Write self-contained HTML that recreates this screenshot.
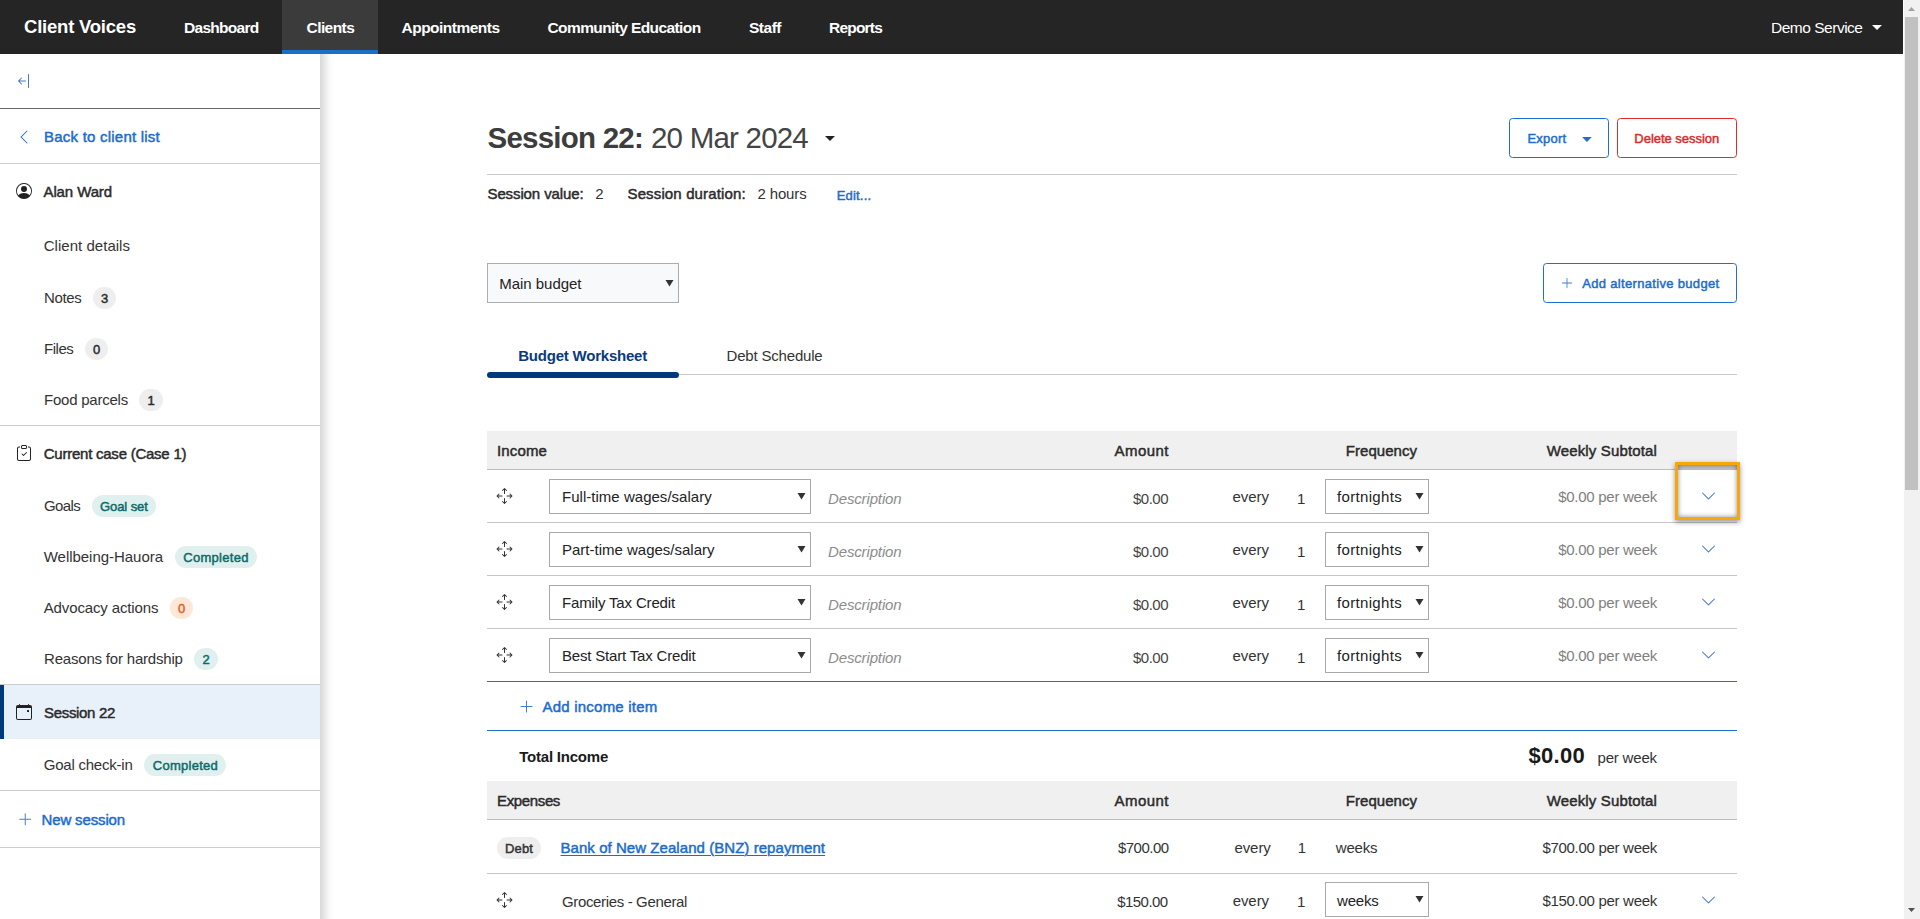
<!DOCTYPE html>
<html lang="en">
<head>
<meta charset="utf-8">
<title>Client Voices - Session 22</title>
<style>
*{box-sizing:border-box;margin:0;padding:0}
html,body{width:1920px;height:919px;overflow:hidden;background:#fff}
body{position:relative;font-family:"Liberation Sans",sans-serif;font-size:15px;color:#333}
.a{position:absolute}
.t{position:absolute;white-space:nowrap}
svg{overflow:visible}
</style>
</head>
<body>

<!-- sidebar -->
<aside>
<div class="a" style="left:0px;top:30px;width:320px;height:920px;background:#fff;box-shadow:4px 0 10px rgba(0,0,0,.2)"></div>
<svg class="a" style="left:16px;top:73px" width="16" height="16" viewBox="0 0 16 16"><path fill="#4b76cc" fill-rule="evenodd" d="M12.500 15a.5.5 0 0 1-.5-.5v-13a.5.5 0 0 1 1 0v13a.5.5 0 0 1-.5.5zM10 8a.5.5 0 0 1-.5.5H3.707l2.147 2.146a.5.5 0 0 1-.708.708l-3-3a.5.5 0 0 1 0-.708l3-3a.5.5 0 1 1 .708.708L3.707 7.500H9.500a.5.5 0 0 1 .5.5z"/></svg>
<div class="a" style="left:0px;top:108px;width:320px;height:1px;background:#6a6a6a"></div>
<svg class="a" style="left:16px;top:129px" width="16" height="16" viewBox="0 0 16 16"><path fill="#1c6ccb" fill-rule="evenodd" d="M11.354 1.646a.5.5 0 0 1 0 .708L5.707 8l5.647 5.646a.5.5 0 0 1-.708.708l-6-6a.5.5 0 0 1 0-.708l6-6a.5.5 0 0 1 .708 0z"/></svg>
<span class="t" style="letter-spacing:0.225px;left:44.00px;top:127.00px;font-size:15px;line-height:20px;color:#1c6ccb;-webkit-text-stroke:0.47px #1c6ccb">Back to client list</span>
<div class="a" style="left:0px;top:163px;width:320px;height:1px;background:#cdcdcd"></div>
<svg class="a" style="left:16px;top:183px" width="16" height="16" viewBox="0 0 16 16"><path fill="#222" fill-rule="evenodd" d="M11 6a3 3 0 1 1-6 0 3 3 0 0 1 6 0zM0 8a8 8 0 1 1 16 0A8 8 0 0 1 0 8zm8-7a7 7 0 0 0-5.468 11.370C3.242 11.226 4.805 10 8 10s4.757 1.225 5.468 2.370A7 7 0 0 0 8 1z"/></svg>
<span class="t" style="letter-spacing:-0.109px;left:43.50px;top:182.00px;font-size:15px;line-height:20px;color:#2b2b2b;-webkit-text-stroke:0.47px #2b2b2b">Alan Ward</span>
<span class="t" style="letter-spacing:0.026px;left:43.75px;top:236.00px;font-size:15px;line-height:20px">Client details</span>
<span class="t" style="letter-spacing:-0.388px;left:44.00px;top:288.00px;font-size:15px;line-height:20px">Notes</span>
<div class="a" style="left:93px;top:287px;width:23px;height:22px;background:#eeeeee;border-radius:11.0px"></div>
<span class="t" style="left:101.00px;top:289.00px;font-size:13px;line-height:20px;color:#2b2b2b;-webkit-text-stroke:0.47px #2b2b2b">3</span>
<span class="t" style="letter-spacing:-0.484px;left:44.00px;top:339.00px;font-size:15px;line-height:20px">Files</span>
<div class="a" style="left:85px;top:338px;width:23px;height:22px;background:#eeeeee;border-radius:11.0px"></div>
<span class="t" style="left:93.00px;top:340.00px;font-size:13px;line-height:20px;color:#2b2b2b;-webkit-text-stroke:0.47px #2b2b2b">0</span>
<span class="t" style="letter-spacing:-0.227px;left:44.00px;top:390.00px;font-size:15px;line-height:20px">Food parcels</span>
<div class="a" style="left:139px;top:389px;width:24px;height:22px;background:#eeeeee;border-radius:11.0px"></div>
<span class="t" style="left:147.50px;top:391.00px;font-size:13px;line-height:20px;color:#2b2b2b;-webkit-text-stroke:0.47px #2b2b2b">1</span>
<div class="a" style="left:0px;top:425px;width:320px;height:1px;background:#cdcdcd"></div>
<svg class="a" style="left:16px;top:445px" width="16" height="16" viewBox="0 0 16 16"><path fill="#222" fill-rule="evenodd" d="M10.854 7.146a.5.5 0 0 1 0 .708l-3 3a.5.5 0 0 1-.708 0l-1.500-1.500a.5.5 0 1 1 .708-.708L7.500 9.793l2.646-2.647a.5.5 0 0 1 .708 0zM4 1.500H3a2 2 0 0 0-2 2V14a2 2 0 0 0 2 2h10a2 2 0 0 0 2-2V3.500a2 2 0 0 0-2-2h-1v1h1a1 1 0 0 1 1 1V14a1 1 0 0 1-1 1H3a1 1 0 0 1-1-1V3.500a1 1 0 0 1 1-1h1v-1zM9.500 1a.5.5 0 0 1 .5.5v1a.5.5 0 0 1-.5.5h-3a.5.5 0 0 1-.5-.5v-1a.5.5 0 0 1 .5-.5h3zm-3-1A1.500 1.500 0 0 0 5 1.500v1A1.500 1.500 0 0 0 6.500 4h3A1.500 1.500 0 0 0 11 2.500v-1A1.500 1.500 0 0 0 9.500 0h-3z"/></svg>
<span class="t" style="letter-spacing:-0.241px;left:43.75px;top:444.00px;font-size:15px;line-height:20px;color:#2b2b2b;-webkit-text-stroke:0.47px #2b2b2b">Current case (Case 1)</span>
<span class="t" style="letter-spacing:-0.588px;left:44.00px;top:496.00px;font-size:15px;line-height:20px">Goals</span>
<div class="a" style="left:92px;top:495px;width:64px;height:22px;background:#dff0ee;border-radius:11.0px"></div>
<span class="t" style="letter-spacing:-0.084px;left:100.00px;top:497.00px;font-size:13px;line-height:20px;color:#0b6b68;-webkit-text-stroke:0.47px #0b6b68">Goal set</span>
<span class="t" style="letter-spacing:-0.034px;left:43.75px;top:547.00px;font-size:15px;line-height:20px">Wellbeing-Hauora</span>
<div class="a" style="left:175px;top:546px;width:82px;height:22px;background:#dff0ee;border-radius:11.0px"></div>
<span class="t" style="letter-spacing:0.292px;left:183.25px;top:548.00px;font-size:13px;line-height:20px;color:#0b6b68;-webkit-text-stroke:0.47px #0b6b68">Completed</span>
<span class="t" style="letter-spacing:-0.140px;left:43.75px;top:598.00px;font-size:15px;line-height:20px">Advocacy actions</span>
<div class="a" style="left:170px;top:597px;width:23px;height:22px;background:#fde8d8;border-radius:11.0px"></div>
<span class="t" style="left:178.00px;top:599.00px;font-size:13px;line-height:20px;color:#e5601a;-webkit-text-stroke:0.47px #e5601a">0</span>
<span class="t" style="letter-spacing:-0.192px;left:44.00px;top:649.00px;font-size:15px;line-height:20px">Reasons for hardship</span>
<div class="a" style="left:194px;top:648px;width:24px;height:22px;background:#dff0ee;border-radius:11.0px"></div>
<span class="t" style="left:202.50px;top:650.00px;font-size:13px;line-height:20px;color:#0b6b68;-webkit-text-stroke:0.47px #0b6b68">2</span>
<div class="a" style="left:0px;top:684px;width:320px;height:1px;background:#cdcdcd"></div>
<div class="a" style="left:0px;top:685px;width:320px;height:54px;background:#e8f0fa;border-left:4px solid #003a7d"></div>
<svg class="a" style="left:16px;top:704px" width="16" height="16" viewBox="0 0 16 16"><path fill="#222" fill-rule="evenodd" d="M11 6.500a.5.5 0 0 1 .5-.5h1a.5.5 0 0 1 .5.5v1a.5.5 0 0 1-.5.5h-1a.5.5 0 0 1-.5-.5v-1zM3.500 0a.5.5 0 0 1 .5.5V1h8V.5a.5.5 0 0 1 1 0V1h1a2 2 0 0 1 2 2v11a2 2 0 0 1-2 2H2a2 2 0 0 1-2-2V3a2 2 0 0 1 2-2h1V.5a.5.5 0 0 1 .5-.5zM1 4v10a1 1 0 0 0 1 1h12a1 1 0 0 0 1-1V4H1z"/></svg>
<span class="t" style="letter-spacing:-0.322px;left:44.00px;top:703.00px;font-size:15px;line-height:20px;color:#2b2b2b;-webkit-text-stroke:0.47px #2b2b2b">Session 22</span>
<span class="t" style="letter-spacing:-0.228px;left:43.75px;top:755.00px;font-size:15px;line-height:20px">Goal check-in</span>
<div class="a" style="left:144px;top:754px;width:82px;height:22px;background:#dff0ee;border-radius:11.0px"></div>
<span class="t" style="letter-spacing:0.264px;left:152.75px;top:756.00px;font-size:13px;line-height:20px;color:#0b6b68;-webkit-text-stroke:0.47px #0b6b68">Completed</span>
<div class="a" style="left:0px;top:790px;width:320px;height:1px;background:#cdcdcd"></div>
<svg class="a" style="left:17px;top:811px" width="17" height="17" viewBox="-0.25 -0.25 17 17"><path fill="#3f7fd6" fill-rule="evenodd" d="M8 2a.5.5 0 0 1 .5.5v5h5a.5.5 0 0 1 0 1h-5v5a.5.5 0 0 1-1 0v-5h-5a.5.5 0 0 1 0-1h5v-5A.5.5 0 0 1 8 2z"/></svg>
<span class="t" style="letter-spacing:-0.141px;left:41.50px;top:810.00px;font-size:15px;line-height:20px;color:#1c6ccb;-webkit-text-stroke:0.47px #1c6ccb">New session</span>
<div class="a" style="left:0px;top:847px;width:320px;height:1px;background:#cdcdcd"></div>
</aside>
<!-- navbar -->
<nav>
<div class="a" style="left:0px;top:0px;width:1903px;height:54px;background:#252525"></div>
<div class="a" style="left:282px;top:0px;width:96px;height:54px;background:#3b3b3b;border-bottom:4px solid #1a6fc7"></div>
<span class="t" style="letter-spacing:-0.216px;left:24.00px;top:15.01px;font-size:18.5px;line-height:24px;color:#fff;font-weight:700">Client Voices</span>
<span class="t" style="letter-spacing:-0.719px;left:184.00px;top:18.00px;font-size:15.5px;line-height:20px;color:#fff;font-weight:700">Dashboard</span>
<span class="t" style="letter-spacing:-0.562px;left:306.50px;top:18.00px;font-size:15.5px;line-height:20px;color:#fff;font-weight:700">Clients</span>
<span class="t" style="letter-spacing:-0.516px;left:401.50px;top:18.00px;font-size:15.5px;line-height:20px;color:#fff;font-weight:700">Appointments</span>
<span class="t" style="letter-spacing:-0.604px;left:547.50px;top:18.00px;font-size:15.5px;line-height:20px;color:#fff;font-weight:700">Community Education</span>
<span class="t" style="letter-spacing:-0.491px;left:749.00px;top:18.00px;font-size:15.5px;line-height:20px;color:#fff;font-weight:700">Staff</span>
<span class="t" style="letter-spacing:-0.797px;left:829.00px;top:18.00px;font-size:15.5px;line-height:20px;color:#fff;font-weight:700">Reports</span>
<span class="t" style="letter-spacing:-0.487px;left:1771.00px;top:18.00px;font-size:15.5px;line-height:20px;color:#fff">Demo Service</span>
<svg class="a" style="left:1872px;top:25px" width="10" height="5" viewBox="0 0 10 5"><polygon fill="#fff" points="0,0 10,0 5,5"/></svg>
</nav>
<!-- scrollbar -->
<div>
<div class="a" style="left:1903px;top:0px;width:17px;height:919px;background:#f1f1f1;border-left:1px solid #fdfdfd"></div>
<div class="a" style="left:1905px;top:17px;width:13px;height:473px;background:#c1c1c1"></div>
<svg class="a" style="left:1908px;top:7px" width="7" height="4" viewBox="0 0 7 4"><polygon fill="#a3a3a3" points="0,4 7,4 3.5,0"/></svg>
<svg class="a" style="left:1908px;top:908px" width="7" height="4" viewBox="0 0 7 4"><polygon fill="#505050" points="0,0 7,0 3.5,4"/></svg>
</div>
<!-- main -->
<main>
<span class="t" style="letter-spacing:-0.770px;left:487.50px;top:119.01px;font-size:29.5px;line-height:38px;color:#3d3d3d;font-weight:700">Session 22:</span>
<span class="t" style="letter-spacing:-0.786px;left:651.00px;top:119.01px;font-size:29.5px;line-height:38px;color:#444">20 Mar 2024</span>
<svg class="a" style="left:825px;top:136px" width="10" height="5" viewBox="0 0 10 5"><polygon fill="#222" points="0,0 10,0 5,5"/></svg>
<div class="a" style="left:1509px;top:118px;width:100px;height:40px;border:1px solid #1f70cd;border-radius:3.5px;background:#fff"></div>
<span class="t" style="letter-spacing:0.195px;left:1527.50px;top:129.00px;font-size:13px;line-height:20px;color:#1c6ccb;-webkit-text-stroke:0.47px #1c6ccb">Export</span>
<svg class="a" style="left:1582px;top:137px" width="10" height="5" viewBox="0 0 10 5"><polygon fill="#1f70cd" points="0.1,0.1 9.8,0.1 4.95,4.9"/></svg>
<div class="a" style="left:1617px;top:118px;width:120px;height:40px;border:1px solid #e02b2b;border-radius:3.5px;background:#fff"></div>
<span class="t" style="letter-spacing:-0.020px;left:1634.30px;top:129.00px;font-size:13px;line-height:20px;color:#d92b2b;-webkit-text-stroke:0.47px #d92b2b">Delete session</span>
<div class="a" style="left:487px;top:174px;width:1250px;height:1px;background:#c8c8c8"></div>
<span class="t" style="letter-spacing:-0.112px;left:487.50px;top:184.00px;font-size:15px;line-height:20px;color:#2b2b2b;-webkit-text-stroke:0.47px #2b2b2b">Session value:</span>
<span class="t" style="left:595.25px;top:184.00px;font-size:15px;line-height:20px">2</span>
<span class="t" style="letter-spacing:0.138px;left:627.50px;top:184.00px;font-size:15px;line-height:20px;color:#2b2b2b;-webkit-text-stroke:0.47px #2b2b2b">Session duration:</span>
<span class="t" style="letter-spacing:-0.150px;left:757.50px;top:184.00px;font-size:15px;line-height:20px">2 hours</span>
<span class="t" style="letter-spacing:0.179px;left:836.75px;top:186.00px;font-size:13px;line-height:20px;color:#1c6ccb;-webkit-text-stroke:0.47px #1c6ccb">Edit...</span>
<div class="a" style="left:487px;top:263px;width:192px;height:40px;border:1px solid #adadad;background:#f8f9fa"></div>
<span class="t" style="letter-spacing:-0.028px;left:499.25px;top:274.00px;font-size:15px;line-height:20px;color:#222">Main budget</span>
<svg class="a" style="left:665px;top:280px" width="9" height="7" viewBox="0 0 9 7"><polygon fill="#333" points="0.5,0 8.5,0 4.5,6.5"/></svg>
<div class="a" style="left:1543px;top:263px;width:194px;height:40px;border:1px solid #1f70cd;border-radius:3.5px;background:#fff"></div>
<svg class="a" style="left:1560px;top:276px" width="14" height="14" viewBox="0 0 16 16"><path fill="#3f7fd6" fill-rule="evenodd" d="M8 2a.5.5 0 0 1 .5.5v5h5a.5.5 0 0 1 0 1h-5v5a.5.5 0 0 1-1 0v-5h-5a.5.5 0 0 1 0-1h5v-5A.5.5 0 0 1 8 2z"/></svg>
<span class="t" style="letter-spacing:0.322px;left:1582.25px;top:274.00px;font-size:13px;line-height:20px;color:#1c6ccb;-webkit-text-stroke:0.47px #1c6ccb">Add alternative budget</span>
<span class="t" style="letter-spacing:-0.219px;left:518.25px;top:346.00px;font-size:15px;line-height:20px;color:#0a3a7d;font-weight:700">Budget Worksheet</span>
<span class="t" style="letter-spacing:-0.185px;left:726.50px;top:346.00px;font-size:15px;line-height:20px;color:#333">Debt Schedule</span>
<div class="a" style="left:487px;top:374px;width:1250px;height:1px;background:#c8c8c8"></div>
<div class="a" style="left:487px;top:372px;width:192px;height:6px;background:#003a7d;border-radius:3px"></div>
<div class="a" style="left:487px;top:431px;width:1250px;height:38px;background:#f0f0f0"></div>
<div class="a" style="left:487px;top:469px;width:1250px;height:1px;background:#bdbdbd"></div>
<span class="t" style="letter-spacing:0.133px;left:497.00px;top:441.00px;font-size:15px;line-height:20px;color:#2b2b2b;-webkit-text-stroke:0.47px #2b2b2b">Income</span>
<span class="t" style="letter-spacing:0.466px;left:1114.50px;top:441.00px;font-size:15px;line-height:20px;color:#2b2b2b;-webkit-text-stroke:0.47px #2b2b2b">Amount</span>
<span class="t" style="letter-spacing:0.042px;left:1345.75px;top:441.00px;font-size:15px;line-height:20px;color:#2b2b2b;-webkit-text-stroke:0.47px #2b2b2b">Frequency</span>
<span class="t" style="letter-spacing:0.145px;left:1546.70px;top:441.00px;font-size:15px;line-height:20px;color:#2b2b2b;-webkit-text-stroke:0.47px #2b2b2b">Weekly Subtotal</span>
<svg class="a" style="left:496px;top:488px" width="17" height="16" viewBox="-0.5 0 17 16"><path fill="#333" fill-rule="evenodd" d="M7.646.146a.5.5 0 0 1 .708 0l2 2a.5.5 0 0 1-.708.708L8.500 1.707V5.500a.5.5 0 0 1-1 0V1.707L6.354 2.854a.5.5 0 1 1-.708-.708l2-2zM8 10a.5.5 0 0 1 .5.5v3.793l1.146-1.147a.5.5 0 0 1 .708.708l-2 2a.5.5 0 0 1-.708 0l-2-2a.5.5 0 0 1 .708-.708L7.500 14.293V10.500A.5.5 0 0 1 8 10zM.146 8.354a.5.5 0 0 1 0-.708l2-2a.5.5 0 1 1 .708.708L1.707 7.500H5.500a.5.5 0 0 1 0 1H1.707l1.147 1.146a.5.5 0 0 1-.708.708l-2-2zM10 8a.5.5 0 0 1 .5-.5h3.793l-1.147-1.146a.5.5 0 0 1 .708-.708l2 2a.5.5 0 0 1 0 .708l-2 2a.5.5 0 0 1-.708-.708L14.293 8.500H10.500A.5.5 0 0 1 10 8z"/></svg>
<div class="a" style="left:549px;top:479px;width:262px;height:35px;border:1px solid #a9a9a9;background:#fff"></div>
<span class="t" style="letter-spacing:0.024px;left:562.00px;top:487.00px;font-size:15px;line-height:20px;color:#222">Full-time wages/salary</span>
<svg class="a" style="left:797px;top:493px" width="9" height="7" viewBox="0 0 9 7"><polygon fill="#333" points="0.5,0 8.5,0 4.5,6.5"/></svg>
<span class="t" style="letter-spacing:-0.139px;left:828.00px;top:489.00px;font-size:15px;line-height:20px;color:#8c8c8c;font-style:italic">Description</span>
<span class="t" style="letter-spacing:-0.509px;left:1133.00px;top:489.00px;font-size:15px;line-height:20px;color:#444">$0.00</span>
<span class="t" style="letter-spacing:-0.037px;left:1232.50px;top:487.00px;font-size:15px;line-height:20px;color:#333">every</span>
<span class="t" style="left:1297.00px;top:489.00px;font-size:15px;line-height:20px;color:#333">1</span>
<div class="a" style="left:1325px;top:479px;width:104px;height:35px;border:1px solid #a9a9a9;background:#fff"></div>
<span class="t" style="letter-spacing:0.330px;left:1337.00px;top:487.00px;font-size:15px;line-height:20px;color:#222">fortnights</span>
<svg class="a" style="left:1415px;top:493px" width="9" height="7" viewBox="0 0 9 7"><polygon fill="#333" points="0.5,0 8.5,0 4.5,6.5"/></svg>
<span class="t" style="letter-spacing:-0.270px;left:1558.20px;top:487.00px;font-size:15px;line-height:20px;color:#808080">$0.00 per week</span>
<svg class="a" style="left:1700px;top:488px" width="17" height="16" viewBox="-0.5 0 17 16"><path fill="#3f72cf" fill-rule="evenodd" d="M1.646 4.646a.5.5 0 0 1 .708 0L8 10.293l5.646-5.647a.5.5 0 0 1 .708.708l-6 6a.5.5 0 0 1-.708 0l-6-6a.5.5 0 0 1 0-.708z"/></svg>
<div class="a" style="left:487px;top:522px;width:1250px;height:1px;background:#c6c6c6"></div>
<svg class="a" style="left:496px;top:541px" width="17" height="16" viewBox="-0.5 0 17 16"><path fill="#333" fill-rule="evenodd" d="M7.646.146a.5.5 0 0 1 .708 0l2 2a.5.5 0 0 1-.708.708L8.500 1.707V5.500a.5.5 0 0 1-1 0V1.707L6.354 2.854a.5.5 0 1 1-.708-.708l2-2zM8 10a.5.5 0 0 1 .5.5v3.793l1.146-1.147a.5.5 0 0 1 .708.708l-2 2a.5.5 0 0 1-.708 0l-2-2a.5.5 0 0 1 .708-.708L7.500 14.293V10.500A.5.5 0 0 1 8 10zM.146 8.354a.5.5 0 0 1 0-.708l2-2a.5.5 0 1 1 .708.708L1.707 7.500H5.500a.5.5 0 0 1 0 1H1.707l1.147 1.146a.5.5 0 0 1-.708.708l-2-2zM10 8a.5.5 0 0 1 .5-.5h3.793l-1.147-1.146a.5.5 0 0 1 .708-.708l2 2a.5.5 0 0 1 0 .708l-2 2a.5.5 0 0 1-.708-.708L14.293 8.500H10.500A.5.5 0 0 1 10 8z"/></svg>
<div class="a" style="left:549px;top:532px;width:262px;height:35px;border:1px solid #a9a9a9;background:#fff"></div>
<span class="t" style="letter-spacing:-0.003px;left:562.00px;top:540.00px;font-size:15px;line-height:20px;color:#222">Part-time wages/salary</span>
<svg class="a" style="left:797px;top:546px" width="9" height="7" viewBox="0 0 9 7"><polygon fill="#333" points="0.5,0 8.5,0 4.5,6.5"/></svg>
<span class="t" style="letter-spacing:-0.139px;left:828.00px;top:542.00px;font-size:15px;line-height:20px;color:#8c8c8c;font-style:italic">Description</span>
<span class="t" style="letter-spacing:-0.509px;left:1133.00px;top:542.00px;font-size:15px;line-height:20px;color:#444">$0.00</span>
<span class="t" style="letter-spacing:-0.037px;left:1232.50px;top:540.00px;font-size:15px;line-height:20px;color:#333">every</span>
<span class="t" style="left:1297.00px;top:542.00px;font-size:15px;line-height:20px;color:#333">1</span>
<div class="a" style="left:1325px;top:532px;width:104px;height:35px;border:1px solid #a9a9a9;background:#fff"></div>
<span class="t" style="letter-spacing:0.330px;left:1337.00px;top:540.00px;font-size:15px;line-height:20px;color:#222">fortnights</span>
<svg class="a" style="left:1415px;top:546px" width="9" height="7" viewBox="0 0 9 7"><polygon fill="#333" points="0.5,0 8.5,0 4.5,6.5"/></svg>
<span class="t" style="letter-spacing:-0.270px;left:1558.20px;top:540.00px;font-size:15px;line-height:20px;color:#808080">$0.00 per week</span>
<svg class="a" style="left:1700px;top:541px" width="17" height="16" viewBox="-0.5 0 17 16"><path fill="#3f72cf" fill-rule="evenodd" d="M1.646 4.646a.5.5 0 0 1 .708 0L8 10.293l5.646-5.647a.5.5 0 0 1 .708.708l-6 6a.5.5 0 0 1-.708 0l-6-6a.5.5 0 0 1 0-.708z"/></svg>
<div class="a" style="left:487px;top:575px;width:1250px;height:1px;background:#c6c6c6"></div>
<svg class="a" style="left:496px;top:594px" width="17" height="16" viewBox="-0.5 0 17 16"><path fill="#333" fill-rule="evenodd" d="M7.646.146a.5.5 0 0 1 .708 0l2 2a.5.5 0 0 1-.708.708L8.500 1.707V5.500a.5.5 0 0 1-1 0V1.707L6.354 2.854a.5.5 0 1 1-.708-.708l2-2zM8 10a.5.5 0 0 1 .5.5v3.793l1.146-1.147a.5.5 0 0 1 .708.708l-2 2a.5.5 0 0 1-.708 0l-2-2a.5.5 0 0 1 .708-.708L7.500 14.293V10.500A.5.5 0 0 1 8 10zM.146 8.354a.5.5 0 0 1 0-.708l2-2a.5.5 0 1 1 .708.708L1.707 7.500H5.500a.5.5 0 0 1 0 1H1.707l1.147 1.146a.5.5 0 0 1-.708.708l-2-2zM10 8a.5.5 0 0 1 .5-.5h3.793l-1.147-1.146a.5.5 0 0 1 .708-.708l2 2a.5.5 0 0 1 0 .708l-2 2a.5.5 0 0 1-.708-.708L14.293 8.500H10.500A.5.5 0 0 1 10 8z"/></svg>
<div class="a" style="left:549px;top:585px;width:262px;height:35px;border:1px solid #a9a9a9;background:#fff"></div>
<span class="t" style="letter-spacing:-0.153px;left:562.00px;top:593.00px;font-size:15px;line-height:20px;color:#222">Family Tax Credit</span>
<svg class="a" style="left:797px;top:599px" width="9" height="7" viewBox="0 0 9 7"><polygon fill="#333" points="0.5,0 8.5,0 4.5,6.5"/></svg>
<span class="t" style="letter-spacing:-0.139px;left:828.00px;top:595.00px;font-size:15px;line-height:20px;color:#8c8c8c;font-style:italic">Description</span>
<span class="t" style="letter-spacing:-0.509px;left:1133.00px;top:595.00px;font-size:15px;line-height:20px;color:#444">$0.00</span>
<span class="t" style="letter-spacing:-0.037px;left:1232.50px;top:593.00px;font-size:15px;line-height:20px;color:#333">every</span>
<span class="t" style="left:1297.00px;top:595.00px;font-size:15px;line-height:20px;color:#333">1</span>
<div class="a" style="left:1325px;top:585px;width:104px;height:35px;border:1px solid #a9a9a9;background:#fff"></div>
<span class="t" style="letter-spacing:0.330px;left:1337.00px;top:593.00px;font-size:15px;line-height:20px;color:#222">fortnights</span>
<svg class="a" style="left:1415px;top:599px" width="9" height="7" viewBox="0 0 9 7"><polygon fill="#333" points="0.5,0 8.5,0 4.5,6.5"/></svg>
<span class="t" style="letter-spacing:-0.270px;left:1558.20px;top:593.00px;font-size:15px;line-height:20px;color:#808080">$0.00 per week</span>
<svg class="a" style="left:1700px;top:594px" width="17" height="16" viewBox="-0.5 0 17 16"><path fill="#3f72cf" fill-rule="evenodd" d="M1.646 4.646a.5.5 0 0 1 .708 0L8 10.293l5.646-5.647a.5.5 0 0 1 .708.708l-6 6a.5.5 0 0 1-.708 0l-6-6a.5.5 0 0 1 0-.708z"/></svg>
<div class="a" style="left:487px;top:628px;width:1250px;height:1px;background:#c6c6c6"></div>
<svg class="a" style="left:496px;top:647px" width="17" height="16" viewBox="-0.5 0 17 16"><path fill="#333" fill-rule="evenodd" d="M7.646.146a.5.5 0 0 1 .708 0l2 2a.5.5 0 0 1-.708.708L8.500 1.707V5.500a.5.5 0 0 1-1 0V1.707L6.354 2.854a.5.5 0 1 1-.708-.708l2-2zM8 10a.5.5 0 0 1 .5.5v3.793l1.146-1.147a.5.5 0 0 1 .708.708l-2 2a.5.5 0 0 1-.708 0l-2-2a.5.5 0 0 1 .708-.708L7.500 14.293V10.500A.5.5 0 0 1 8 10zM.146 8.354a.5.5 0 0 1 0-.708l2-2a.5.5 0 1 1 .708.708L1.707 7.500H5.500a.5.5 0 0 1 0 1H1.707l1.147 1.146a.5.5 0 0 1-.708.708l-2-2zM10 8a.5.5 0 0 1 .5-.5h3.793l-1.147-1.146a.5.5 0 0 1 .708-.708l2 2a.5.5 0 0 1 0 .708l-2 2a.5.5 0 0 1-.708-.708L14.293 8.500H10.500A.5.5 0 0 1 10 8z"/></svg>
<div class="a" style="left:549px;top:638px;width:262px;height:35px;border:1px solid #a9a9a9;background:#fff"></div>
<span class="t" style="letter-spacing:-0.180px;left:562.00px;top:646.00px;font-size:15px;line-height:20px;color:#222">Best Start Tax Credit</span>
<svg class="a" style="left:797px;top:652px" width="9" height="7" viewBox="0 0 9 7"><polygon fill="#333" points="0.5,0 8.5,0 4.5,6.5"/></svg>
<span class="t" style="letter-spacing:-0.139px;left:828.00px;top:648.00px;font-size:15px;line-height:20px;color:#8c8c8c;font-style:italic">Description</span>
<span class="t" style="letter-spacing:-0.509px;left:1133.00px;top:648.00px;font-size:15px;line-height:20px;color:#444">$0.00</span>
<span class="t" style="letter-spacing:-0.037px;left:1232.50px;top:646.00px;font-size:15px;line-height:20px;color:#333">every</span>
<span class="t" style="left:1297.00px;top:648.00px;font-size:15px;line-height:20px;color:#333">1</span>
<div class="a" style="left:1325px;top:638px;width:104px;height:35px;border:1px solid #a9a9a9;background:#fff"></div>
<span class="t" style="letter-spacing:0.330px;left:1337.00px;top:646.00px;font-size:15px;line-height:20px;color:#222">fortnights</span>
<svg class="a" style="left:1415px;top:652px" width="9" height="7" viewBox="0 0 9 7"><polygon fill="#333" points="0.5,0 8.5,0 4.5,6.5"/></svg>
<span class="t" style="letter-spacing:-0.270px;left:1558.20px;top:646.00px;font-size:15px;line-height:20px;color:#808080">$0.00 per week</span>
<svg class="a" style="left:1700px;top:647px" width="17" height="16" viewBox="-0.5 0 17 16"><path fill="#3f72cf" fill-rule="evenodd" d="M1.646 4.646a.5.5 0 0 1 .708 0L8 10.293l5.646-5.647a.5.5 0 0 1 .708.708l-6 6a.5.5 0 0 1-.708 0l-6-6a.5.5 0 0 1 0-.708z"/></svg>
<div class="a" style="left:1678px;top:465px;width:59px;height:4px;background:rgba(0,0,0,.2)"></div>
<div class="a" style="left:1675px;top:462px;width:65px;height:58px;border:3px solid #f5a70c;box-shadow:0 2px 5px rgba(0,0,0,.42), inset 0 0 5px rgba(0,0,20,.45)"></div>
<div class="a" style="left:487px;top:681px;width:1250px;height:1px;background:#1f70cd"></div>
<svg class="a" style="left:518px;top:698px" width="17" height="17" viewBox="-0.5 -0.5 17 17"><path fill="#3f7fd6" fill-rule="evenodd" d="M8 2a.5.5 0 0 1 .5.5v5h5a.5.5 0 0 1 0 1h-5v5a.5.5 0 0 1-1 0v-5h-5a.5.5 0 0 1 0-1h5v-5A.5.5 0 0 1 8 2z"/></svg>
<span class="t" style="letter-spacing:0.219px;left:542.50px;top:697.00px;font-size:15px;line-height:20px;color:#1c6ccb;-webkit-text-stroke:0.47px #1c6ccb">Add income item</span>
<div class="a" style="left:487px;top:730px;width:1250px;height:1px;background:#1f70cd"></div>
<span class="t" style="letter-spacing:-0.221px;left:519.25px;top:747.00px;font-size:15px;line-height:20px;color:#1a1a1a;font-weight:700">Total Income</span>
<span class="t" style="letter-spacing:0.287px;left:1528.50px;top:741.00px;font-size:22px;line-height:29px;color:#1a1a1a;font-weight:700">$0.00</span>
<span class="t" style="letter-spacing:-0.184px;left:1597.50px;top:748.00px;font-size:15px;line-height:20px;color:#333">per week</span>
<div class="a" style="left:487px;top:781px;width:1250px;height:38px;background:#f0f0f0"></div>
<div class="a" style="left:487px;top:819px;width:1250px;height:1px;background:#bdbdbd"></div>
<span class="t" style="letter-spacing:-0.359px;left:497.00px;top:791.00px;font-size:15px;line-height:20px;color:#2b2b2b;-webkit-text-stroke:0.47px #2b2b2b">Expenses</span>
<span class="t" style="letter-spacing:0.466px;left:1114.50px;top:791.00px;font-size:15px;line-height:20px;color:#2b2b2b;-webkit-text-stroke:0.47px #2b2b2b">Amount</span>
<span class="t" style="letter-spacing:0.042px;left:1345.75px;top:791.00px;font-size:15px;line-height:20px;color:#2b2b2b;-webkit-text-stroke:0.47px #2b2b2b">Frequency</span>
<span class="t" style="letter-spacing:0.145px;left:1546.70px;top:791.00px;font-size:15px;line-height:20px;color:#2b2b2b;-webkit-text-stroke:0.47px #2b2b2b">Weekly Subtotal</span>
<div class="a" style="left:497px;top:837px;width:44px;height:22px;background:#eeeeee;border-radius:11.0px"></div>
<span class="t" style="letter-spacing:0.133px;left:505.00px;top:839.00px;font-size:13px;line-height:20px;color:#333;-webkit-text-stroke:0.47px #333">Debt</span>
<span class="t" style="letter-spacing:0.054px;left:560.50px;top:838.00px;font-size:15px;line-height:20px;color:#1c6ccb;-webkit-text-stroke:0.47px #1c6ccb;text-decoration:underline;text-underline-offset:2px;text-decoration-thickness:1px">Bank of New Zealand (BNZ) repayment</span>
<span class="t" style="letter-spacing:-0.483px;left:1117.90px;top:838.00px;font-size:15px;line-height:20px;color:#333">$700.00</span>
<span class="t" style="letter-spacing:-0.058px;left:1234.40px;top:838.00px;font-size:15px;line-height:20px;color:#333">every</span>
<span class="t" style="left:1297.70px;top:838.00px;font-size:15px;line-height:20px;color:#333">1</span>
<span class="t" style="letter-spacing:-0.186px;left:1335.80px;top:838.00px;font-size:15px;line-height:20px;color:#333">weeks</span>
<span class="t" style="letter-spacing:-0.292px;left:1542.40px;top:838.00px;font-size:15px;line-height:20px;color:#333">$700.00 per week</span>
<div class="a" style="left:487px;top:873px;width:1250px;height:1px;background:#c6c6c6"></div>
<svg class="a" style="left:496px;top:892px" width="17" height="16" viewBox="-0.5 0 17 16"><path fill="#333" fill-rule="evenodd" d="M7.646.146a.5.5 0 0 1 .708 0l2 2a.5.5 0 0 1-.708.708L8.500 1.707V5.500a.5.5 0 0 1-1 0V1.707L6.354 2.854a.5.5 0 1 1-.708-.708l2-2zM8 10a.5.5 0 0 1 .5.5v3.793l1.146-1.147a.5.5 0 0 1 .708.708l-2 2a.5.5 0 0 1-.708 0l-2-2a.5.5 0 0 1 .708-.708L7.500 14.293V10.500A.5.5 0 0 1 8 10zM.146 8.354a.5.5 0 0 1 0-.708l2-2a.5.5 0 1 1 .708.708L1.707 7.500H5.500a.5.5 0 0 1 0 1H1.707l1.147 1.146a.5.5 0 0 1-.708.708l-2-2zM10 8a.5.5 0 0 1 .5-.5h3.793l-1.147-1.146a.5.5 0 0 1 .708-.708l2 2a.5.5 0 0 1 0 .708l-2 2a.5.5 0 0 1-.708-.708L14.293 8.500H10.500A.5.5 0 0 1 10 8z"/></svg>
<span class="t" style="letter-spacing:-0.354px;left:562.00px;top:892.00px;font-size:15px;line-height:20px;color:#333">Groceries - General</span>
<span class="t" style="letter-spacing:-0.533px;left:1117.20px;top:892.00px;font-size:15px;line-height:20px;color:#333">$150.00</span>
<span class="t" style="letter-spacing:-0.078px;left:1232.70px;top:891.00px;font-size:15px;line-height:20px;color:#333">every</span>
<span class="t" style="left:1297.00px;top:892.00px;font-size:15px;line-height:20px;color:#333">1</span>
<div class="a" style="left:1325px;top:882px;width:104px;height:35px;border:1px solid #a9a9a9;background:#fff"></div>
<span class="t" style="letter-spacing:-0.206px;left:1337.00px;top:891.00px;font-size:15px;line-height:20px;color:#222">weeks</span>
<svg class="a" style="left:1415px;top:896px" width="9" height="7" viewBox="0 0 9 7"><polygon fill="#333" points="0.5,0 8.5,0 4.5,6.5"/></svg>
<span class="t" style="letter-spacing:-0.292px;left:1542.40px;top:891.00px;font-size:15px;line-height:20px;color:#333">$150.00 per week</span>
<svg class="a" style="left:1700px;top:892px" width="17" height="16" viewBox="-0.5 0 17 16"><path fill="#3f72cf" fill-rule="evenodd" d="M1.646 4.646a.5.5 0 0 1 .708 0L8 10.293l5.646-5.647a.5.5 0 0 1 .708.708l-6 6a.5.5 0 0 1-.708 0l-6-6a.5.5 0 0 1 0-.708z"/></svg>
</main>
</body>
</html>
